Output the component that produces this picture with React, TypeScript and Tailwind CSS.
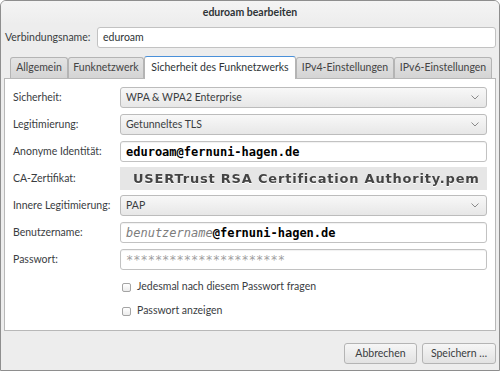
const sans = { fontFamily: "Lato, 'Noto Sans', sans-serif" };
const mono = { fontFamily: "'DejaVu Sans Mono', 'Liberation Mono', monospace" };

function Chevron() {
  return (
    <svg width="8" height="5" viewBox="0 0 8 5" className="shrink-0">
      <path d="M0.5 0.5 L4 4 L7.5 0.5" fill="none" stroke="#8a8a8a" strokeWidth="1" />
    </svg>
  );
}

function Combo({ value }: { value: string }) {
  return (
    <div className="flex h-[21px] flex-1 items-center justify-between rounded-[3px] border border-[#bcbcbc] bg-gradient-to-b from-[#f8f8f8] to-[#e7e7e7] pl-[5px] pr-[7px] text-[10.5px] text-[#3a3d3f]">
      <span>{value}</span>
      <Chevron />
    </div>
  );
}

function Field({ children }: { children: React.ReactNode }) {
  return (
    <div
      className="flex h-[21px] flex-1 items-center rounded-[3px] border border-[#c2c2c2] bg-white pl-[5px] text-[12px] shadow-[inset_0_1px_1px_rgba(0,0,0,0.06)]"
      style={mono}
    >
      {children}
    </div>
  );
}

function Row({ label, children }: { label: string; children: React.ReactNode }) {
  return (
    <div className="flex h-[21px] items-center">
      <div className="w-[107px] shrink-0 text-[10.5px] text-[#3a3d3f]">{label}</div>
      {children}
    </div>
  );
}

function Check({ label }: { label: string }) {
  return (
    <div className="flex h-[20px] items-center pl-[109px]">
      <div className="h-[9px] w-[9px] rounded-[2px] border border-[#a4a4a4] bg-gradient-to-b from-white to-[#ececec]" />
      <span className="ml-[6px] text-[10.5px] text-[#3a3d3f]">{label}</span>
    </div>
  );
}

const tabs = [
  { label: "Allgemein", w: "w-[58px]" },
  { label: "Funknetzwerk", w: "w-[76px]" },
  { label: "Sicherheit des Funknetzwerks", w: "w-[152px]", active: true },
  { label: "IPv4-Einstellungen", w: "w-[98px]" },
  { label: "IPv6-Einstellungen", w: "w-[98px]" },
];

export default function App() {
  return (
    <div
      className="flex h-[371px] w-[500px] flex-col overflow-hidden rounded-t-[6px] border border-[#8e8e8e] bg-[#ededed]"
      style={sans}
    >
      <div className="flex h-[23px] shrink-0 items-center justify-center bg-gradient-to-b from-[#f4f4f4] to-[#ededed] text-[10.5px] font-bold text-[#2e3436]">
        eduroam bearbeiten
      </div>

      <div className="mt-[3px] flex items-center pl-[4px] pr-[3px]">
        <div className="w-[92px] text-[10.5px] text-[#3a3d3f]">Verbindungsname:</div>
        <div className="flex h-[21px] flex-1 items-center rounded-[3px] border border-[#c2c2c2] bg-white pl-[5px] text-[10.5px] text-[#2e3436]">
          eduroam
        </div>
      </div>

      <div className="relative z-10 mt-[8px] flex h-[22px] items-end pl-[9px]">
        {tabs.map((t) =>
          t.active ? (
            <div
              key={t.label}
              className={`${t.w} -mb-px flex h-[23px] items-center justify-center rounded-t-[3px] border border-b-0 border-[#b4b4b4] border-t-[#4a90d9] bg-white text-[10.5px] text-[#2e3436]`}
            >
              {t.label}
            </div>
          ) : (
            <div
              key={t.label}
              className={`${t.w} flex h-[21px] items-center justify-center rounded-t-[3px] border border-b-0 border-[#b4b4b4] bg-gradient-to-b from-[#e4e4e4] to-[#d4d4d4] text-[10.5px] text-[#444]`}
            >
              {t.label}
            </div>
          )
        )}
      </div>

      <div className="mx-[3px] flex h-[253px] flex-col border border-[#b8b8b8] bg-white pl-[8px] pr-[8px] pt-[8px]">
        <div className="flex flex-col gap-[6px]">
          <Row label="Sicherheit:">
            <Combo value="WPA & WPA2 Enterprise" />
          </Row>
          <Row label="Legitimierung:">
            <Combo value="Getunneltes TLS" />
          </Row>
          <Row label="Anonyme Identität:">
            <Field>
              <span className="font-bold text-black">eduroam@fernuni-hagen.de</span>
            </Field>
          </Row>
          <Row label="CA-Zertifikat:">
            <div className="-my-[1px] flex h-[23px] flex-1 items-center bg-[#e6e6e6] pl-[13px]">
              <span
                className="text-[13px] font-bold tracking-[0.8px] text-[#444] blur-[0.6px] [text-shadow:0_1px_0_#fff]"
                style={{ fontFamily: "'DejaVu Sans', Verdana, sans-serif" }}
              >
                USERTrust RSA Certification Authority.pem
              </span>
            </div>
          </Row>
          <Row label="Innere Legitimierung:">
            <Combo value="PAP" />
          </Row>
          <Row label="Benutzername:">
            <Field>
              <span className="italic text-[#7d7d7d]">benutzername</span>
              <span className="font-bold text-black">@fernuni-hagen.de</span>
            </Field>
          </Row>
          <Row label="Passwort:">
            <Field>
              <span className="italic text-[#a0a0a0]">**********************</span>
            </Field>
          </Row>
        </div>
        <div className="mt-[7px] flex flex-col gap-[4px]">
          <Check label="Jedesmal nach diesem Passwort fragen" />
          <Check label="Passwort anzeigen" />
        </div>
      </div>

      <div className="mt-[12px] flex justify-end gap-[5px] pr-[3px]">
        <button
          type="button"
          className="h-[21px] w-[73px] rounded-[3px] border border-[#b4b4b4] bg-gradient-to-b from-[#f6f6f6] to-[#e2e2e2] text-[10.5px] text-[#3a3d3f]"
        >
          Abbrechen
        </button>
        <button
          type="button"
          className="h-[21px] w-[74px] rounded-[3px] border border-[#b4b4b4] bg-gradient-to-b from-[#f6f6f6] to-[#e2e2e2] text-[10.5px] text-[#3a3d3f]"
        >
          Speichern …
        </button>
      </div>
    </div>
  );
}
